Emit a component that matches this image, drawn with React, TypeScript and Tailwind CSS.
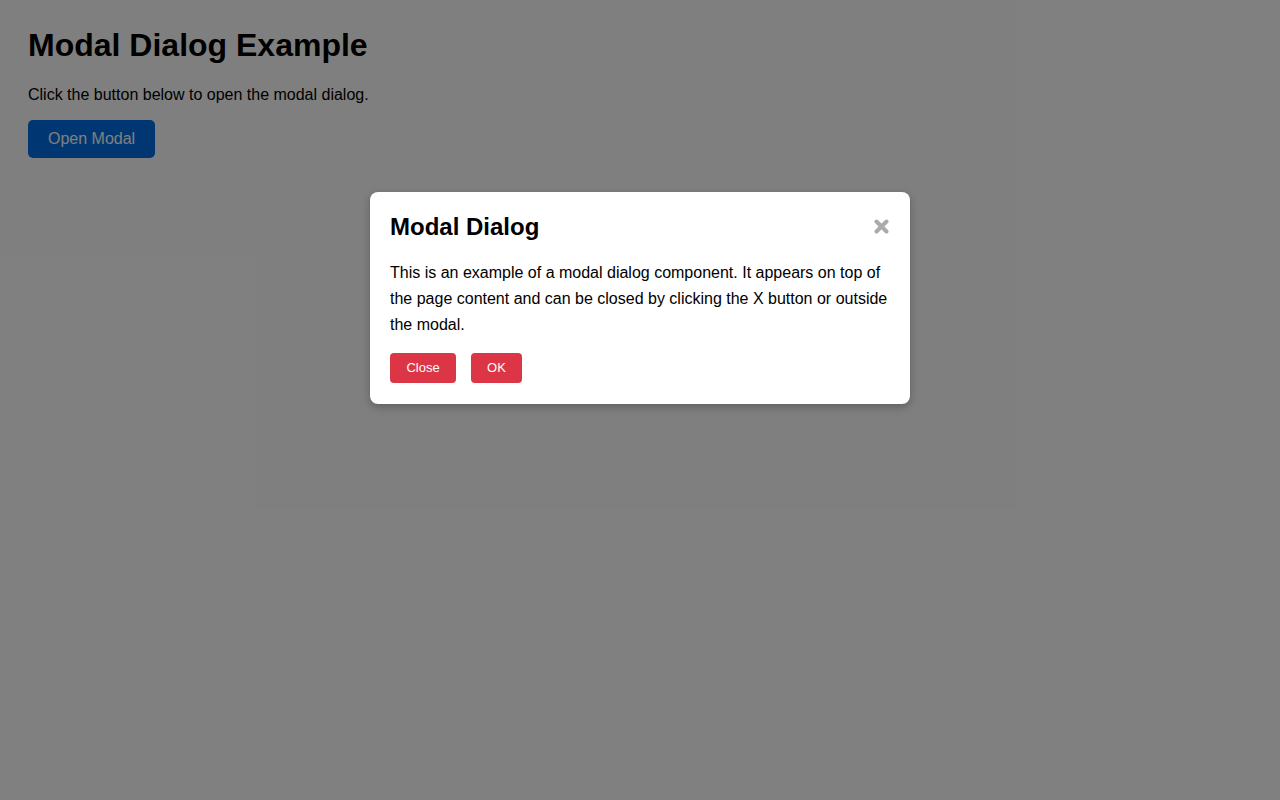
import { useState } from 'react'

export default function App() {
  const [open, setOpen] = useState(true)

  return (
    <div className="relative min-h-[800px] bg-white text-black font-['Liberation_Sans',Arial,sans-serif]">
      <div className="px-[28px] pt-[27px]">
        <h1 className="text-[32px] font-bold leading-[37px] mb-[22px]">Modal Dialog Example</h1>
        <p className="text-[16px] leading-[18px] mb-[16px]">Click the button below to open the modal dialog.</p>
        <button
          onClick={() => setOpen(true)}
          className="h-[38px] px-[20px] rounded-[5px] bg-[#006ee6] text-white text-[16px] leading-[18px]"
        >
          Open Modal
        </button>
      </div>

      {open && (
        <div className="absolute inset-0 bg-black/50" onClick={() => setOpen(false)}>
          <div
            onClick={e => e.stopPropagation()}
            className="mx-auto mt-[192px] w-[540px] bg-white rounded-[8px] px-[20px] pt-[21px] pb-[21px] shadow-[0_3px_8px_rgba(0,0,0,0.25)]"
          >
            <div className="flex items-start justify-between">
              <h2 className="text-[24px] font-bold leading-[28px]">Modal Dialog</h2>
              <button onClick={() => setOpen(false)} className="mt-[6px] mr-[1px]" aria-label="close">
                <svg width="15" height="15" viewBox="0 0 15 15">
                  <path d="M2.5 2.5 L12.5 12.5 M12.5 2.5 L2.5 12.5" stroke="#aaaaaa" strokeWidth="4" strokeLinecap="round" />
                </svg>
              </button>
            </div>
            <p className="mt-[19px] text-[16px] leading-[26px]">
              This is an example of a modal dialog component. It appears on top of the page content and can be closed by clicking the X button or outside the modal.
            </p>
            <div className="mt-[15px] flex gap-[15px]">
              <button onClick={() => setOpen(false)} className="h-[30px] w-[66px] rounded-[4px] bg-[#dc3545] text-white text-[13px]">
                Close
              </button>
              <button onClick={() => setOpen(false)} className="h-[30px] w-[51px] rounded-[4px] bg-[#dc3545] text-white text-[13px]">
                OK
              </button>
            </div>
          </div>
        </div>
      )}
    </div>
  )
}
